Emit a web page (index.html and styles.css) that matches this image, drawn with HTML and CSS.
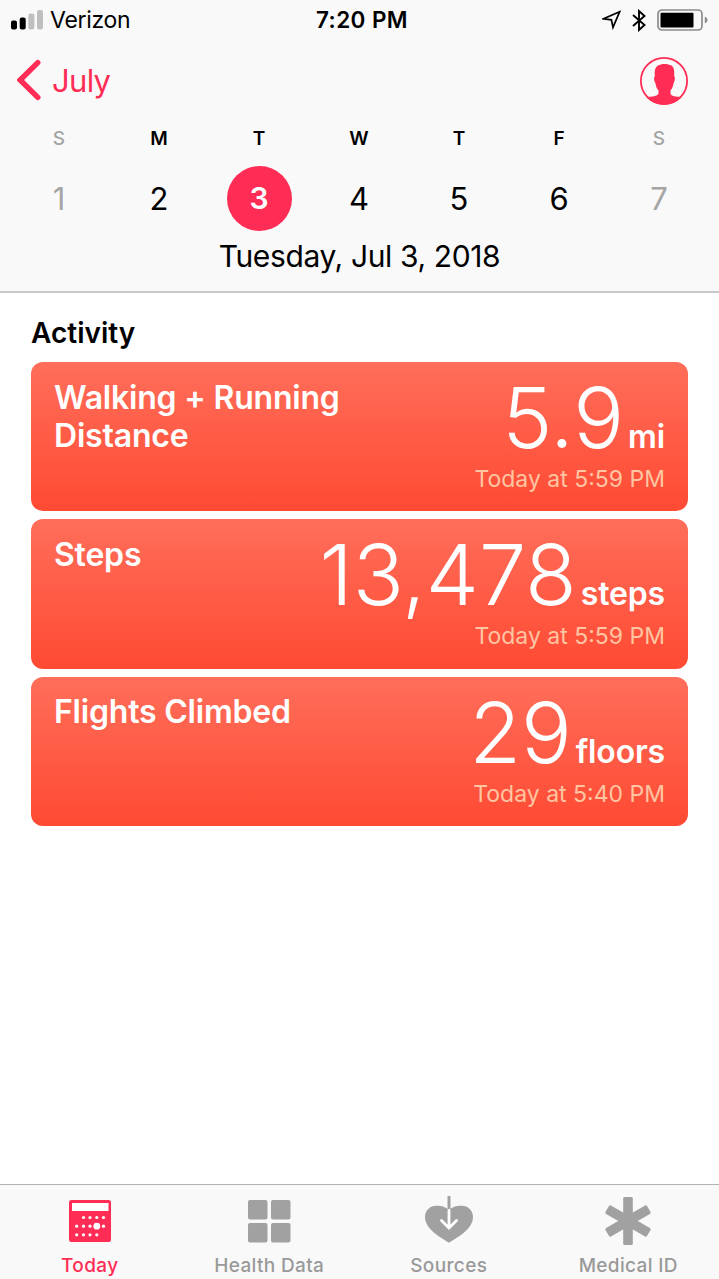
FILE: index.html
```html
<!DOCTYPE html>
<html lang="en">

<head>
    <meta charset="utf-8">
    <title>Health - Today</title>
    <link rel="stylesheet" href="styles.css">
</head>

<body>
    <div id="header">
        <div class="status">
            <div class="status-left">
                <svg class="signal" width="32" height="20" viewBox="0 0 32 20">
                    <rect x="0" y="10.5" width="6" height="9" rx="2" />
                    <rect x="8.700" y="7.500" width="6" height="12" rx="2" />
                    <rect class="off" x="17.400" y="3.500" width="6" height="16" rx="2" />
                    <rect class="off" x="26" y="0" width="6" height="19.500" rx="2" />
                </svg>
                <span class="carrier">Verizon</span>
            </div>
            <div class="time">7:20 PM</div>
            <div class="status-right">
                <svg width="20" height="20" viewBox="0 0 20 20">
                    <path d="M17.600 1.800 L1.600 8.800 L9.400 9.800 L11 17.400 Z" fill="none" stroke="#000" stroke-width="1.700" />
                </svg>
                <svg class="bluetooth" width="14" height="23" viewBox="0 0 14 23">
                    <path d="M1 6 L12.500 16 L7 21 V2 L12.500 7 L1 17" fill="none" stroke="#000" stroke-width="1.900" />
                </svg>
                <svg class="battery" width="51" height="22" viewBox="0 0 51 22">
                    <rect x="1" y="1" width="44" height="20" rx="4" fill="none" stroke="#8c8c8c" stroke-width="1.700" />
                    <rect x="3.500" y="3.700" width="33" height="14.800" rx="1" />
                    <path d="M47.800 7.500 Q50.600 8.500 50.600 11 Q50.600 13.500 47.800 14.500 Z" fill="#8c8c8c" />
                </svg>
            </div>
        </div>
        <div class="nav">
            <div class="back">
                <svg width="24" height="42" viewBox="0 0 24 42">
                    <path d="M20.800 3.600 L3.200 21 L20.800 38.400" fill="none" stroke="#ff2d55" stroke-width="5.400" stroke-linecap="round" />
                </svg>
                <span>July</span>
            </div>
            <svg class="profile" width="48" height="48" viewBox="0 0 48 48">
                <circle cx="24" cy="24" r="23.100" fill="none" stroke="#ff2d55" stroke-width="1.800" />
                <path d="M18 8.500 C21 6.400 28 6.400 31.500 8.500 C34 10.500 34.500 13 34.200 19.500 C35.400 20 35 24 33.600 26 C33.200 29 32.200 31.500 30.500 33.500 L30.500 36.500 C31 39.500 36 39.500 41.500 40 C37 45 31 47.500 24 47.500 C17 47.500 11 45 6.500 40 C12 39.500 17.500 39.500 18.500 36.500 L18.500 33.500 C16.800 31.500 15.800 29 15.400 26 C14 24 13.600 20 14.800 19.500 C14.500 13 15 10.500 18 8.500 Z" fill="#ff2d55" />
            </svg>
        </div>
        <div class="week names">
            <div class="dim">S</div>
            <div>M</div>
            <div>T</div>
            <div>W</div>
            <div>T</div>
            <div>F</div>
            <div class="dim">S</div>
        </div>
        <div class="week days">
            <div class="dim">1</div>
            <div>2</div>
            <div class="selected">3</div>
            <div>4</div>
            <div>5</div>
            <div>6</div>
            <div class="dim">7</div>
        </div>
        <div class="date">Tuesday, Jul 3, 2018</div>
    </div>

    <div id="main">
        <h1>Activity</h1>
        <div class="card">
            <div class="title">Walking + Running Distance</div>
            <div class="reading">
                <div class="value"><span class="number">5.9</span><span class="unit">mi</span></div>
                <div class="when">Today at 5:59 PM</div>
            </div>
        </div>
        <div class="card">
            <div class="title">Steps</div>
            <div class="reading">
                <div class="value"><span class="number">13,478</span><span class="unit">steps</span></div>
                <div class="when">Today at 5:59 PM</div>
            </div>
        </div>
        <div class="card">
            <div class="title">Flights Climbed</div>
            <div class="reading">
                <div class="value"><span class="number">29</span><span class="unit">floors</span></div>
                <div class="when">Today at 5:40 PM</div>
            </div>
        </div>
    </div>

    <div id="tabs">
        <div class="tab active">
            <svg width="50" height="50" viewBox="0 0 50 50">
                <rect x="4" y="4" width="42" height="42" rx="2.500" fill="#ff2d55" />
                <g fill="#fff">
                    <rect x="7" y="7" width="36.500" height="8" />
                    <circle cx="18.500" cy="21.500" r="1.600" />
                    <circle cx="25" cy="21.500" r="1.600" />
                    <circle cx="31.800" cy="21.500" r="1.600" />
                    <circle cx="38.500" cy="21.500" r="1.600" />
                    <circle cx="11.700" cy="30.200" r="1.600" />
                    <circle cx="18.500" cy="30.200" r="1.600" />
                    <circle cx="25" cy="30.200" r="1.600" />
                    <circle cx="31.800" cy="30.200" r="3.400" />
                    <circle cx="38.500" cy="30.200" r="1.600" />
                    <circle cx="11.700" cy="38.800" r="1.600" />
                    <circle cx="18.500" cy="38.800" r="1.600" />
                    <circle cx="25" cy="38.800" r="1.600" />
                    <circle cx="31.800" cy="38.800" r="1.600" />
                </g>
            </svg>
            <span>Today</span>
        </div>
        <div class="tab">
            <svg width="50" height="50" viewBox="0 0 50 50" fill="#a1a1a1">
                <rect x="4" y="4" width="19.500" height="19.500" rx="2" />
                <rect x="27" y="4" width="19.500" height="19.500" rx="2" />
                <rect x="4" y="27" width="19.500" height="19.500" rx="2" />
                <rect x="27" y="27" width="19.500" height="19.500" rx="2" />
            </svg>
            <span>Health Data</span>
        </div>
        <div class="tab">
            <svg width="50" height="50" viewBox="0 0 50 50" fill="none" stroke-linecap="round">
                <path d="M25 46.800 C19 42.500 1 34 1 21 C1 14.500 6 9.700 12.500 9.700 C18 9.700 22 11 25 14.500 C28 11 32 9.700 37.500 9.700 C44 9.700 49 14.500 49 21 C49 34 31 42.500 25 46.800 Z" fill="#a1a1a1" />
                <path d="M25 1 V13" stroke="#a1a1a1" stroke-width="3" />
                <path d="M25 14.500 V31 M17.500 24.500 L25 32 L32.500 24.500" stroke="#fff" stroke-width="2.800" />
            </svg>
            <span>Sources</span>
        </div>
        <div class="tab">
            <svg width="50" height="50" viewBox="0 0 50 50" fill="#a1a1a1">
                <rect x="20.200" y="1" width="9.600" height="48" rx="1.500" />
                <rect x="20.200" y="1" width="9.600" height="48" rx="1.500" transform="rotate(60 25 25)" />
                <rect x="20.200" y="1" width="9.600" height="48" rx="1.500" transform="rotate(-60 25 25)" />
            </svg>
            <span>Medical ID</span>
        </div>
    </div>
</body>

</html>
```
FILE: styles.css
```css
* {
    box-sizing: border-box;
}

body {
    margin: 0;
    height: 1279px;
    display: flex;
    flex-direction: column;
    overflow: hidden;
    background-color: white;
    color: #000;
    font-family: Inter, "Liberation Sans", sans-serif;
}

svg {
    display: block;
}

#header {
    height: 293px;
    background-color: #f9f9f9;
    border-bottom: 2px solid #c8c8ca;
}

.status {
    height: 40px;
    padding: 0 11px;
    display: grid;
    grid-template-columns: 1fr auto 1fr;
    align-items: center;
    font-size: 23px;
}

.status-left,
.status-right {
    display: flex;
    align-items: center;
}

.status-right {
    justify-content: flex-end;
}

.off {
    fill: #bfbfbf;
}

.carrier {
    margin-left: 7px;
    letter-spacing: -0.3px;
}

.time {
    margin-left: 5px;
    font-size: 22.5px;
    font-weight: 600;
    line-height: 26px;
    letter-spacing: 0.4px;
}

.bluetooth {
    margin-left: 10px;
}

.battery {
    margin-left: 11px;
}

.nav {
    height: 80px;
    padding: 0 31px 0 17px;
    display: flex;
    align-items: center;
    justify-content: space-between;
}

.profile {
    margin-top: 1px;
}

.back {
    display: flex;
    align-items: center;
    color: #ff2d55;
    font-size: 31px;
}

.back span {
    margin-left: 11px;
    letter-spacing: -0.7px;
}

.week {
    padding: 0 10px 0 9px;
    display: grid;
    grid-template-columns: repeat(7, 1fr);
    justify-items: center;
    text-align: center;
}

.names {
    font-size: 19px;
    font-weight: 600;
    line-height: 37px;
}

.days {
    margin-top: 9px;
    font-size: 31px;
    line-height: 65px;
}

.dim {
    color: #a5a5a5;
}

.names .dim {
    font-weight: 500;
}

.selected {
    width: 65px;
    height: 65px;
    border-radius: 50%;
    background-color: #ff2d55;
    color: white;
    font-size: 30px;
    font-weight: 600;
}

.date {
    font-size: 30px;
    line-height: 50px;
    letter-spacing: -0.38px;
    text-align: center;
}

#main {
    flex: 1;
    padding: 21.2px 31px 0;
}

h1 {
    margin: 0 0 10px;
    font-size: 28px;
    font-weight: 600;
    line-height: 38px;
}

.card {
    height: 149.3px;
    margin-bottom: 8px;
    padding: 16px 23px 0;
    display: flex;
    justify-content: space-between;
    border-radius: 12px;
    background: linear-gradient(#ff6e5a, #ff4a33);
    color: white;
}

.title {
    width: 300px;
    padding-top: 0.5px;
    font-size: 32px;
    font-weight: 600;
    line-height: 38px;
    letter-spacing: -0.2px;
}

.reading {
    text-align: right;
    white-space: nowrap;
}

.value {
    height: 84px;
    line-height: 78px;
}

.number {
    font-size: 84.5px;
    font-weight: 300;
}

.unit {
    margin-left: 4px;
    font-size: 32px;
    font-weight: 600;
    letter-spacing: -0.15px;
}

.when {
    color: #ffc5a2;
    font-size: 23px;
    line-height: 34px;
}

#tabs {
    height: 95px;
    padding: 11px 1px 0 0;
    display: grid;
    grid-template-columns: repeat(4, 1fr);
    background-color: #f9f9f9;
    border-top: 1px solid #b2b2b2;
}

.tab {
    display: flex;
    flex-direction: column;
    align-items: center;
    color: #999;
    font-size: 19px;
    font-weight: 500;
    line-height: 40px;
    letter-spacing: 0.35px;
}

.active {
    color: #ff2d55;
}
```
